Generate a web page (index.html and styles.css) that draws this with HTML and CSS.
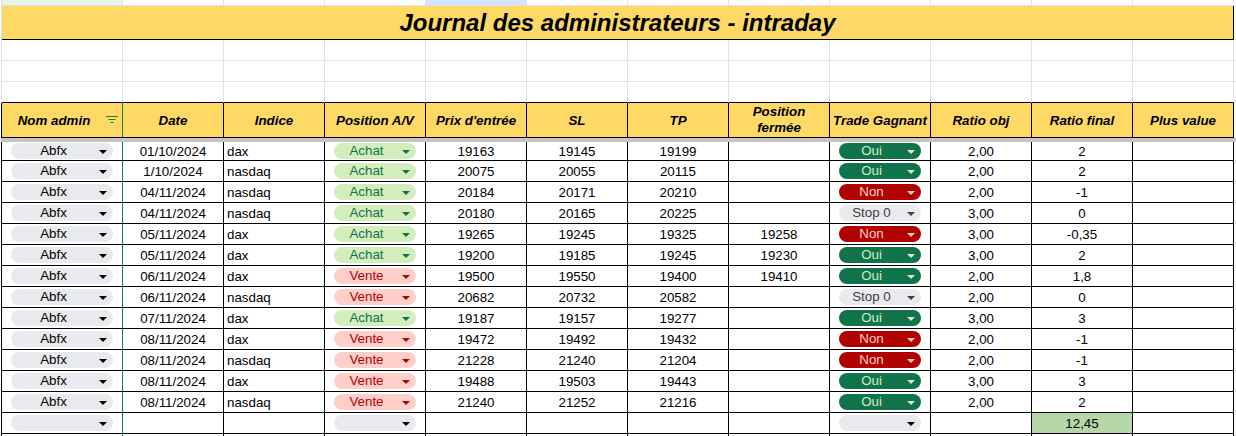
FILE: index.html
```html
<!DOCTYPE html>
<html lang="fr">
<head>
<meta charset="utf-8">
<title>Journal des administrateurs - intraday</title>
<link rel="stylesheet" href="styles.css">
</head>
<body>
<div class="sheet">
  <div class="row row--strip">
    <div class="g g--selA"></div><div class="g"></div><div class="g"></div><div class="g"></div><div class="g g--selE"></div><div class="g"></div><div class="g"></div><div class="g"></div><div class="g"></div><div class="g"></div><div class="g"></div><div class="g"></div><div class="g g--fill"></div>
  </div>
  <div class="row row--title">
    <div class="title">Journal des administrateurs - intraday</div>
    <div class="g g--fill"></div>
  </div>
  <div class="row row--empty">
    <div class="g"></div><div class="g"></div><div class="g"></div><div class="g"></div><div class="g"></div><div class="g"></div><div class="g"></div><div class="g"></div><div class="g"></div><div class="g"></div><div class="g"></div><div class="g"></div><div class="g g--fill"></div>
  </div>
  <div class="row row--empty">
    <div class="g"></div><div class="g"></div><div class="g"></div><div class="g"></div><div class="g"></div><div class="g"></div><div class="g"></div><div class="g"></div><div class="g"></div><div class="g"></div><div class="g"></div><div class="g"></div><div class="g g--fill"></div>
  </div>
  <div class="row row--empty row--above">
    <div class="g"></div><div class="g"></div><div class="g"></div><div class="g"></div><div class="g"></div><div class="g"></div><div class="g"></div><div class="g"></div><div class="g"></div><div class="g"></div><div class="g"></div><div class="g"></div><div class="g g--fill"></div>
  </div>

  <div class="row row--head">
    <div class="c c--a h h--filter"><span class="h__label">Nom admin</span><svg class="filter" width="12" height="8" viewBox="0 0 12 8"><path d="M0 0.5H12M2.5 3.5H9.5M4.5 6.5H7.5" stroke="#188038" stroke-width="1" fill="none"/></svg></div>
    <div class="c h">Date</div>
    <div class="c h">Indice</div>
    <div class="c h">Position A/V</div>
    <div class="c h">Prix d'entrée</div>
    <div class="c h">SL</div>
    <div class="c h">TP</div>
    <div class="c h h--two">Position<br>fermée</div>
    <div class="c h">Trade Gagnant</div>
    <div class="c h">Ratio obj</div>
    <div class="c h">Ratio final</div>
    <div class="c h">Plus value</div>
    <div class="g g--fill"></div>
  </div>
  <div class="frozen"></div>

  <div class="row row--data row--first">
    <div class="c c--a"><span class="chip chip--grey"><span class="chip__label">Abfx</span><span class="chip__arrow"></span></span></div>
    <div class="c">01/10/2024</div>
    <div class="c c--left">dax</div>
    <div class="c"><span class="chip chip--achat"><span class="chip__label">Achat</span><span class="chip__arrow"></span></span></div>
    <div class="c">19163</div><div class="c">19145</div><div class="c">19199</div><div class="c"></div>
    <div class="c"><span class="chip chip--oui"><span class="chip__label">Oui</span><span class="chip__arrow"></span></span></div>
    <div class="c">2,00</div><div class="c">2</div><div class="c"></div>
    <div class="g g--fill"></div>
  </div>
  <div class="row row--data">
    <div class="c c--a"><span class="chip chip--grey"><span class="chip__label">Abfx</span><span class="chip__arrow"></span></span></div>
    <div class="c">1/10/2024</div>
    <div class="c c--left">nasdaq</div>
    <div class="c"><span class="chip chip--achat"><span class="chip__label">Achat</span><span class="chip__arrow"></span></span></div>
    <div class="c">20075</div><div class="c">20055</div><div class="c">20115</div><div class="c"></div>
    <div class="c"><span class="chip chip--oui"><span class="chip__label">Oui</span><span class="chip__arrow"></span></span></div>
    <div class="c">2,00</div><div class="c">2</div><div class="c"></div>
    <div class="g g--fill"></div>
  </div>
  <div class="row row--data">
    <div class="c c--a"><span class="chip chip--grey"><span class="chip__label">Abfx</span><span class="chip__arrow"></span></span></div>
    <div class="c">04/11/2024</div>
    <div class="c c--left">nasdaq</div>
    <div class="c"><span class="chip chip--achat"><span class="chip__label">Achat</span><span class="chip__arrow"></span></span></div>
    <div class="c">20184</div><div class="c">20171</div><div class="c">20210</div><div class="c"></div>
    <div class="c"><span class="chip chip--non"><span class="chip__label">Non</span><span class="chip__arrow"></span></span></div>
    <div class="c">2,00</div><div class="c">-1</div><div class="c"></div>
    <div class="g g--fill"></div>
  </div>
  <div class="row row--data">
    <div class="c c--a"><span class="chip chip--grey"><span class="chip__label">Abfx</span><span class="chip__arrow"></span></span></div>
    <div class="c">04/11/2024</div>
    <div class="c c--left">nasdaq</div>
    <div class="c"><span class="chip chip--achat"><span class="chip__label">Achat</span><span class="chip__arrow"></span></span></div>
    <div class="c">20180</div><div class="c">20165</div><div class="c">20225</div><div class="c"></div>
    <div class="c"><span class="chip chip--stop"><span class="chip__label">Stop 0</span><span class="chip__arrow"></span></span></div>
    <div class="c">3,00</div><div class="c">0</div><div class="c"></div>
    <div class="g g--fill"></div>
  </div>
  <div class="row row--data">
    <div class="c c--a"><span class="chip chip--grey"><span class="chip__label">Abfx</span><span class="chip__arrow"></span></span></div>
    <div class="c">05/11/2024</div>
    <div class="c c--left">dax</div>
    <div class="c"><span class="chip chip--achat"><span class="chip__label">Achat</span><span class="chip__arrow"></span></span></div>
    <div class="c">19265</div><div class="c">19245</div><div class="c">19325</div><div class="c">19258</div>
    <div class="c"><span class="chip chip--non"><span class="chip__label">Non</span><span class="chip__arrow"></span></span></div>
    <div class="c">3,00</div><div class="c">-0,35</div><div class="c"></div>
    <div class="g g--fill"></div>
  </div>
  <div class="row row--data">
    <div class="c c--a"><span class="chip chip--grey"><span class="chip__label">Abfx</span><span class="chip__arrow"></span></span></div>
    <div class="c">05/11/2024</div>
    <div class="c c--left">dax</div>
    <div class="c"><span class="chip chip--achat"><span class="chip__label">Achat</span><span class="chip__arrow"></span></span></div>
    <div class="c">19200</div><div class="c">19185</div><div class="c">19245</div><div class="c">19230</div>
    <div class="c"><span class="chip chip--oui"><span class="chip__label">Oui</span><span class="chip__arrow"></span></span></div>
    <div class="c">3,00</div><div class="c">2</div><div class="c"></div>
    <div class="g g--fill"></div>
  </div>
  <div class="row row--data">
    <div class="c c--a"><span class="chip chip--grey"><span class="chip__label">Abfx</span><span class="chip__arrow"></span></span></div>
    <div class="c">06/11/2024</div>
    <div class="c c--left">dax</div>
    <div class="c"><span class="chip chip--vente"><span class="chip__label">Vente</span><span class="chip__arrow"></span></span></div>
    <div class="c">19500</div><div class="c">19550</div><div class="c">19400</div><div class="c">19410</div>
    <div class="c"><span class="chip chip--oui"><span class="chip__label">Oui</span><span class="chip__arrow"></span></span></div>
    <div class="c">2,00</div><div class="c">1,8</div><div class="c"></div>
    <div class="g g--fill"></div>
  </div>
  <div class="row row--data">
    <div class="c c--a"><span class="chip chip--grey"><span class="chip__label">Abfx</span><span class="chip__arrow"></span></span></div>
    <div class="c">06/11/2024</div>
    <div class="c c--left">nasdaq</div>
    <div class="c"><span class="chip chip--vente"><span class="chip__label">Vente</span><span class="chip__arrow"></span></span></div>
    <div class="c">20682</div><div class="c">20732</div><div class="c">20582</div><div class="c"></div>
    <div class="c"><span class="chip chip--stop"><span class="chip__label">Stop 0</span><span class="chip__arrow"></span></span></div>
    <div class="c">2,00</div><div class="c">0</div><div class="c"></div>
    <div class="g g--fill"></div>
  </div>
  <div class="row row--data">
    <div class="c c--a"><span class="chip chip--grey"><span class="chip__label">Abfx</span><span class="chip__arrow"></span></span></div>
    <div class="c">07/11/2024</div>
    <div class="c c--left">dax</div>
    <div class="c"><span class="chip chip--achat"><span class="chip__label">Achat</span><span class="chip__arrow"></span></span></div>
    <div class="c">19187</div><div class="c">19157</div><div class="c">19277</div><div class="c"></div>
    <div class="c"><span class="chip chip--oui"><span class="chip__label">Oui</span><span class="chip__arrow"></span></span></div>
    <div class="c">3,00</div><div class="c">3</div><div class="c"></div>
    <div class="g g--fill"></div>
  </div>
  <div class="row row--data">
    <div class="c c--a"><span class="chip chip--grey"><span class="chip__label">Abfx</span><span class="chip__arrow"></span></span></div>
    <div class="c">08/11/2024</div>
    <div class="c c--left">dax</div>
    <div class="c"><span class="chip chip--vente"><span class="chip__label">Vente</span><span class="chip__arrow"></span></span></div>
    <div class="c">19472</div><div class="c">19492</div><div class="c">19432</div><div class="c"></div>
    <div class="c"><span class="chip chip--non"><span class="chip__label">Non</span><span class="chip__arrow"></span></span></div>
    <div class="c">2,00</div><div class="c">-1</div><div class="c"></div>
    <div class="g g--fill"></div>
  </div>
  <div class="row row--data">
    <div class="c c--a"><span class="chip chip--grey"><span class="chip__label">Abfx</span><span class="chip__arrow"></span></span></div>
    <div class="c">08/11/2024</div>
    <div class="c c--left">nasdaq</div>
    <div class="c"><span class="chip chip--vente"><span class="chip__label">Vente</span><span class="chip__arrow"></span></span></div>
    <div class="c">21228</div><div class="c">21240</div><div class="c">21204</div><div class="c"></div>
    <div class="c"><span class="chip chip--non"><span class="chip__label">Non</span><span class="chip__arrow"></span></span></div>
    <div class="c">2,00</div><div class="c">-1</div><div class="c"></div>
    <div class="g g--fill"></div>
  </div>
  <div class="row row--data">
    <div class="c c--a"><span class="chip chip--grey"><span class="chip__label">Abfx</span><span class="chip__arrow"></span></span></div>
    <div class="c">08/11/2024</div>
    <div class="c c--left">dax</div>
    <div class="c"><span class="chip chip--vente"><span class="chip__label">Vente</span><span class="chip__arrow"></span></span></div>
    <div class="c">19488</div><div class="c">19503</div><div class="c">19443</div><div class="c"></div>
    <div class="c"><span class="chip chip--oui"><span class="chip__label">Oui</span><span class="chip__arrow"></span></span></div>
    <div class="c">3,00</div><div class="c">3</div><div class="c"></div>
    <div class="g g--fill"></div>
  </div>
  <div class="row row--data">
    <div class="c c--a"><span class="chip chip--grey"><span class="chip__label">Abfx</span><span class="chip__arrow"></span></span></div>
    <div class="c">08/11/2024</div>
    <div class="c c--left">nasdaq</div>
    <div class="c"><span class="chip chip--vente"><span class="chip__label">Vente</span><span class="chip__arrow"></span></span></div>
    <div class="c">21240</div><div class="c">21252</div><div class="c">21216</div><div class="c"></div>
    <div class="c"><span class="chip chip--oui"><span class="chip__label">Oui</span><span class="chip__arrow"></span></span></div>
    <div class="c">2,00</div><div class="c">2</div><div class="c"></div>
    <div class="g g--fill"></div>
  </div>
  <div class="row row--data">
    <div class="c c--a"><span class="chip chip--grey"><span class="chip__label"></span><span class="chip__arrow"></span></span></div>
    <div class="c"></div>
    <div class="c"></div>
    <div class="c"><span class="chip chip--grey"><span class="chip__label"></span><span class="chip__arrow"></span></span></div>
    <div class="c"></div><div class="c"></div><div class="c"></div><div class="c"></div>
    <div class="c"><span class="chip chip--grey"><span class="chip__label"></span><span class="chip__arrow"></span></span></div>
    <div class="c"></div><div class="c c--total">12,45</div><div class="c"></div>
    <div class="g g--fill"></div>
  </div>
  <div class="row row--data">
    <div class="c c--a"></div><div class="c"></div><div class="c"></div><div class="c"></div><div class="c"></div><div class="c"></div><div class="c"></div><div class="c"></div><div class="c"></div><div class="c"></div><div class="c"></div><div class="c"></div>
    <div class="g g--fill"></div>
  </div>
</div>
</body>
</html>
```

FILE: styles.css
```css
html, body {
  margin: 0;
  padding: 0;
  background: #ffffff;
}

body {
  font-family: "Liberation Sans", Arial, sans-serif;
  font-size: 10pt;
  color: #000000;
  overflow: hidden;
}

.sheet {
  margin-left: 1px;
  width: 1235px;
}

.row {
  display: grid;
  grid-template-columns: 121px repeat(11, 101px) 1fr;
  box-sizing: border-box;
}

/* plain grid cells */
.g {
  box-sizing: border-box;
  border-right: 1px solid #e1e1e1;
  border-bottom: 1px solid #e1e1e1;
}

.g--fill {
  border-right: none;
}

.row--strip,
.row--title,
.row--empty {
  border-left: 1px solid #e1e1e1;
}

.row--strip {
  height: 6px;
}

.g--selA {
  background: #e6f4ea;
}

.g--selE {
  background: #d3e3fd;
}

.row--title {
  height: 34px;
}

.title {
  grid-column: span 12;
  box-sizing: border-box;
  background: #ffd966;
  border-right: 1px solid #000000;
  border-bottom: 1px solid #000000;
  display: flex;
  align-items: center;
  justify-content: center;
  font-size: 24px;
  font-weight: bold;
  font-style: italic;
  padding-top: 1px;
}

.row--empty {
  height: 21px;
}

.row--above .g:not(.g--fill) {
  border-bottom-color: #000000;
}

/* table cells */
.row--head,
.row--data {
  border-left: 1px solid #000000;
}

.c {
  box-sizing: border-box;
  border-right: 1px solid #000000;
  border-bottom: 1px solid #000000;
  display: flex;
  align-items: center;
  justify-content: center;
  white-space: nowrap;
  overflow: hidden;
  min-width: 0;
}

.c--a {
  border-right-color: #188038;
}

.c--left {
  justify-content: flex-start;
  padding-left: 3px;
}

.c--total {
  background: #b6d7a8;
}

.row--head {
  height: 35px;
}

.h {
  background: #ffd966;
  font-weight: bold;
  font-style: italic;
  text-align: center;
}

.h--two {
  line-height: 16px;
}

.h--filter {
  justify-content: space-between;
}

.h__label {
  flex: 1;
  text-align: center;
}

.filter {
  margin-right: 4px;
  flex: none;
}

.frozen {
  height: 4px;
  background: #c4c4c4;
}

.row--data {
  height: 21px;
}

.row--data.row--first {
  height: 19px;
}

/* dropdown chips */
.chip {
  flex: 1;
  margin: 0 9px;
  height: 16px;
  border-radius: 8px;
  display: flex;
  align-items: center;
  min-width: 0;
}

.chip__label {
  flex: 1;
  text-align: center;
  line-height: 16px;
}

.chip__arrow {
  flex: none;
  width: 0;
  height: 0;
  margin: 1px 6px 0 3px;
  border-left: 4px solid transparent;
  border-right: 4px solid transparent;
  border-top: 4px solid currentColor;
}

.chip--grey {
  background: #e8eaed;
  color: #000000;
}

.chip--stop {
  background: #e8eaed;
  color: #3c4043;
}

.chip--achat {
  background: #d4edbc;
  color: #11734b;
}

.chip--vente {
  background: #ffcfc9;
  color: #b10202;
}

.chip--oui {
  background: #11734b;
  color: #d4edbc;
}

.chip--non {
  background: #b10202;
  color: #ffcfc9;
}
```
